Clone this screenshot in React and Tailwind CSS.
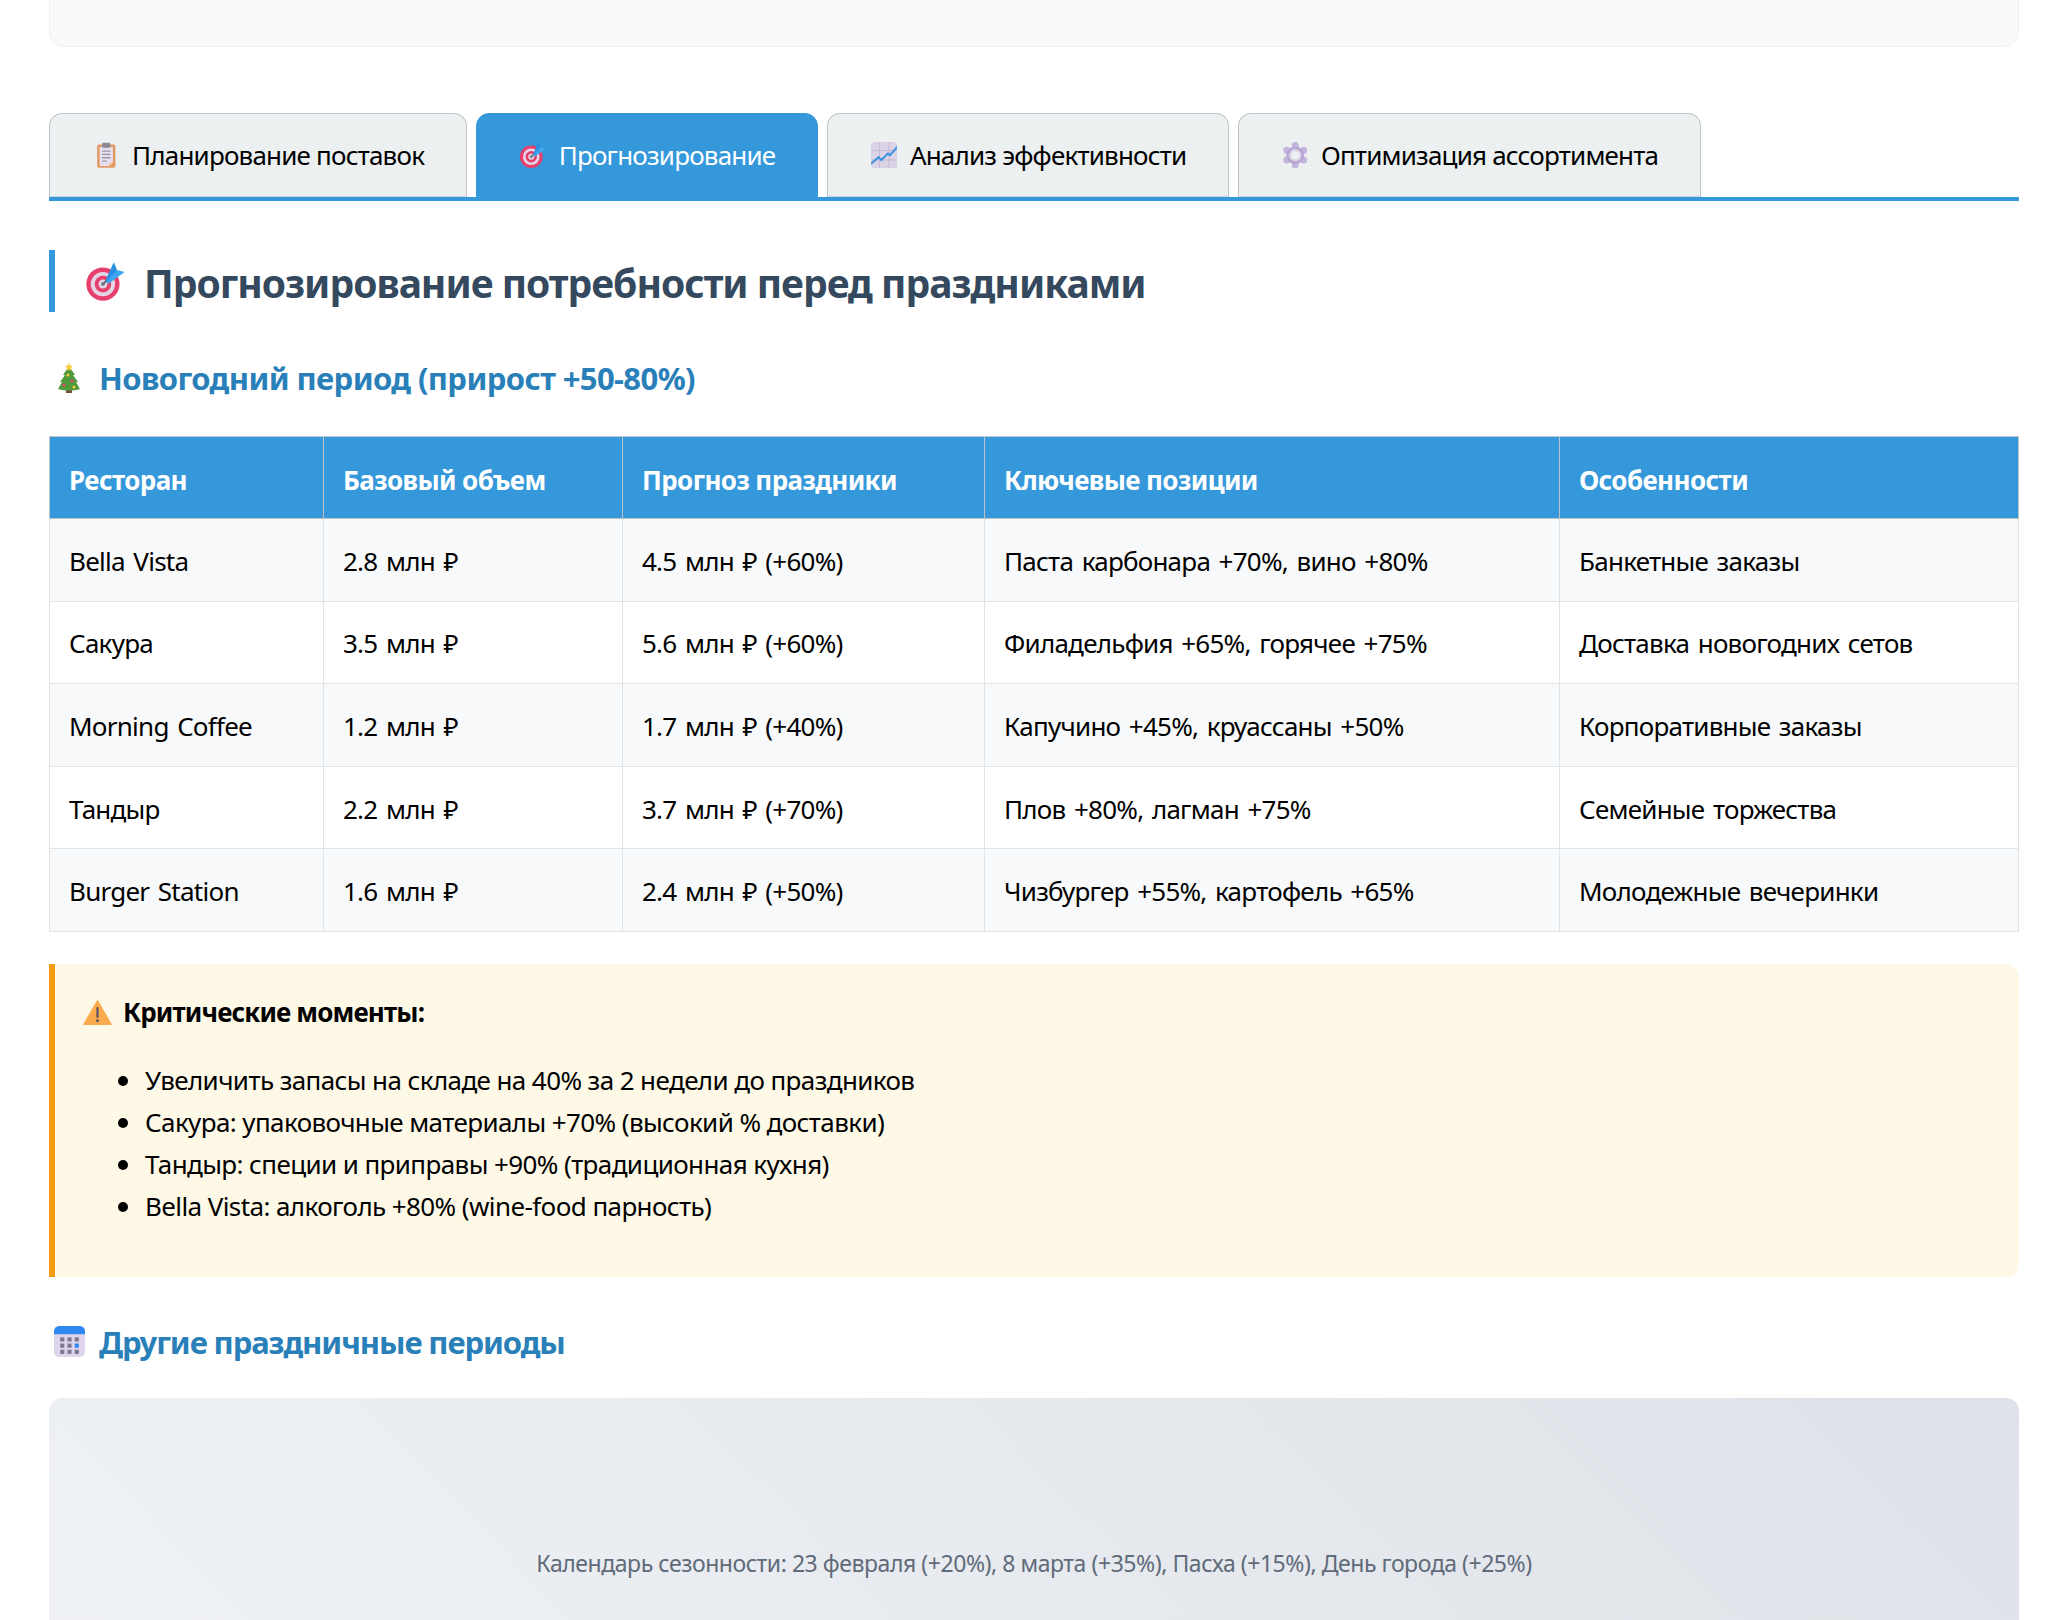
const font = "font-['Noto_Sans','Open_Sans',sans-serif]";

function ClipboardIcon({ className }) {
  return (
    <svg viewBox="0 0 32 32" className={className}>
      <rect x="5" y="3" width="22" height="28" rx="2" fill="#e39a62" />
      <path d="M8 6h16v19l-5 4H8z" fill="#e6e0f0" />
      <path d="M19 29v-4h5z" fill="#f4c9a0" />
      <rect x="11" y="1" width="10" height="6" rx="1.5" fill="#8d8794" />
      <path d="M11 11h10M11 15h10M11 19h10M11 23h6" stroke="#9c95a8" strokeWidth="1.6" />
    </svg>
  );
}

function TargetIcon({ className }) {
  return (
    <svg viewBox="0 0 32 32" className={className}>
      <circle cx="14" cy="18" r="13" fill="#e8406c" />
      <circle cx="14" cy="18" r="9.5" fill="#e3d5e6" />
      <circle cx="14" cy="18" r="6.5" fill="#e8406c" />
      <circle cx="14" cy="18" r="3.5" fill="#e3d5e6" />
      <circle cx="14" cy="18" r="1.6" fill="#8b8391" />
      <path d="M14 18 L19 13" stroke="#5f6a7a" strokeWidth="1.4" />
      <path d="M16 15L22.5 1l2.5 6-7 9z" fill="#2a8fe0" />
      <path d="M16.5 16.5L25 7l6 1.5L18 18z" fill="#3ba7f0" />
    </svg>
  );
}

function ChartIcon({ className }) {
  return (
    <svg viewBox="2 2 28 28" className={className}>
      <rect x="2" y="2" width="28" height="28" rx="4" fill="#dcd3e6" />
      <path d="M2 11h28M2 21h28M11 2v28M21 2v28" stroke="#c5b9d4" strokeWidth="1" />
      <path d="M2 25l8-7 3 3 7-7 2 2 8-9" fill="none" stroke="#3b94e0" strokeWidth="2.2" />
    </svg>
  );
}

function GearIcon({ className }) {
  return (
    <svg viewBox="1 1 30 30" className={className}>
      <g fill="#c3b6dd">
        <circle cx="16" cy="5" r="4" />
        <circle cx="16" cy="27" r="4" />
        <circle cx="6.5" cy="10.5" r="4" />
        <circle cx="25.5" cy="10.5" r="4" />
        <circle cx="6.5" cy="21.5" r="4" />
        <circle cx="25.5" cy="21.5" r="4" />
      </g>
      <circle cx="16" cy="16" r="10" fill="#b5a5d3" />
      <circle cx="16" cy="16" r="7" fill="#dcd6e6" />
      <circle cx="16" cy="16" r="4.5" fill="#eef0f2" />
    </svg>
  );
}

function TreeIcon({ className }) {
  return (
    <svg viewBox="4 1 24 30" className={className}>
      <rect x="13" y="27" width="6" height="4" fill="#7a4a3a" />
      <path d="M16 4L10 13h2L7 20h2L5 27c7 2 15 2 22 0l-4-7h2l-5-7h2z" fill="#4f9a3c" />
      <path d="M16 1l1.2 2.6 2.8.3-2 2 .5 2.8-2.5-1.3-2.5 1.3.5-2.8-2-2 2.8-.3z" fill="#f7cf3d" />
      <circle cx="15" cy="13" r="1.5" fill="#f7cf3d" />
      <circle cx="19" cy="19" r="1.5" fill="#e8406c" />
      <circle cx="11" cy="23" r="1.5" fill="#e8406c" />
      <circle cx="21" cy="25" r="1.5" fill="#f7cf3d" />
    </svg>
  );
}

function WarningIcon({ className }) {
  return (
    <svg viewBox="0 0 32 32" className={className}>
      <path d="M16 3L31 29H1z" fill="#fbab4e" stroke="#fbab4e" strokeWidth="1.5" strokeLinejoin="round" />
      <rect x="14.8" y="10" width="2.4" height="12" rx="1" fill="#5c5160" />
      <circle cx="16" cy="25" r="1.6" fill="#5c5160" />
    </svg>
  );
}

function CalendarIcon({ className }) {
  return (
    <svg viewBox="1 1 30 30" className={className}>
      <rect x="1" y="1" width="30" height="30" rx="5" fill="#ded4ec" />
      <path d="M1 9V6a5 5 0 0 1 5-5h20a5 5 0 0 1 5 5v3z" fill="#2f87f0" />
      <g fill="#7d7890">
        <rect x="7" y="12" width="4" height="4" />
        <rect x="14" y="12" width="4" height="4" />
        <rect x="21" y="12" width="4" height="4" />
        <rect x="7" y="18" width="4" height="4" />
        <rect x="14" y="18" width="4" height="4" />
        <rect x="7" y="24" width="4" height="4" />
        <rect x="14" y="24" width="4" height="4" />
        <rect x="21" y="24" width="4" height="4" />
      </g>
      <rect x="21" y="18" width="4" height="4" fill="#2f87f0" />
    </svg>
  );
}

const tabs = [
  { label: "Планирование поставок", Icon: ClipboardIcon },
  { label: "Прогнозирование", Icon: TargetIcon, active: true },
  { label: "Анализ эффективности", Icon: ChartIcon },
  { label: "Оптимизация ассортимента", Icon: GearIcon },
];

const headers = ["Ресторан", "Базовый объем", "Прогноз праздники", "Ключевые позиции", "Особенности"];

const rows = [
  ["Bella Vista", "2.8 млн ₽", "4.5 млн ₽ (+60%)", "Паста карбонара +70%, вино +80%", "Банкетные заказы"],
  ["Сакура", "3.5 млн ₽", "5.6 млн ₽ (+60%)", "Филадельфия +65%, горячее +75%", "Доставка новогодних сетов"],
  ["Morning Coffee", "1.2 млн ₽", "1.7 млн ₽ (+40%)", "Капучино +45%, круассаны +50%", "Корпоративные заказы"],
  ["Тандыр", "2.2 млн ₽", "3.7 млн ₽ (+70%)", "Плов +80%, лагман +75%", "Семейные торжества"],
  ["Burger Station", "1.6 млн ₽", "2.4 млн ₽ (+50%)", "Чизбургер +55%, картофель +65%", "Молодежные вечеринки"],
];

const notes = [
  "Увеличить запасы на складе на 40% за 2 недели до праздников",
  "Сакура: упаковочные материалы +70% (высокий % доставки)",
  "Тандыр: специи и приправы +90% (традиционная кухня)",
  "Bella Vista: алкоголь +80% (wine-food парность)",
];

export default function App() {
  return (
    <div className={`${font} h-[1620px] overflow-hidden bg-white pl-[49px] pr-[30px] text-black`}>
      <div className="h-[47px] rounded-b-[16px] border border-t-0 border-[#f0f2f2] bg-[#f9fafa]" />

      <div className="mt-[66px] flex h-[88px] gap-[8.5px] border-b-[4px] border-[#3498db]">
        {tabs.map(({ label, Icon, active }) => (
          <div
            key={label}
            className={`flex h-[84px] items-center gap-[10px] rounded-t-[13px] border pl-[40px] pr-[42px] text-[26px] tracking-[-0.8px] ${
              active
                ? "border-[#3498db] bg-[#3498db] text-white"
                : "border-[#bdc3c7] border-b-[#cfd4d6] bg-[#ecf0f1] text-black"
            }`}
          >
            <span className="flex w-[32px] shrink-0 justify-center">
              <Icon className={active ? "h-[28px] w-[28px]" : "h-[26.5px] w-[26.5px]"} />
            </span>
            {label}
          </div>
        ))}
      </div>

      <h2 className="mt-[49px] flex h-[62px] items-center gap-[18px] border-l-[6px] border-[#3498db] pl-[30px] pt-[4px] text-[39px] font-bold tracking-[-1px] text-[#34495e]">
        <TargetIcon className="-mt-[4px] h-[41px] w-[41px] shrink-0" />
        Прогнозирование потребности перед праздниками
      </h2>

      <h3 className="mt-[46px] flex h-[40px] items-center gap-[18px] pl-[8px] text-[31px] font-bold tracking-[-0.6px] text-[#2980b9]">
        <TreeIcon className="h-[30px] w-[24px] shrink-0" />
        Новогодний период (прирост +50-80%)
      </h3>

      <table className="mt-[38px] w-full table-fixed border-collapse text-[26px] tracking-[-0.75px] [word-spacing:2.5px]">
        <colgroup>
          <col className="w-[274px]" />
          <col className="w-[299px]" />
          <col className="w-[362px]" />
          <col className="w-[575px]" />
          <col />
        </colgroup>
        <thead>
          <tr className="h-[82px] bg-[#3498db] text-left text-white">
            {headers.map((h) => (
              <th key={h} className="border border-[#bdc3c7] px-[19px] pt-[5px] font-bold tracking-[-0.6px] [word-spacing:0px]">
                {h}
              </th>
            ))}
          </tr>
        </thead>
        <tbody>
          {rows.map((row, i) => (
            <tr key={row[0]} className={`h-[82.6px] ${i % 2 === 0 ? "bg-[#f8f9fa]" : "bg-white"}`}>
              {row.map((cell) => (
                <td key={cell} className="border border-[#e1e4e6] px-[19px] pt-[3px]">
                  {cell}
                </td>
              ))}
            </tr>
          ))}
        </tbody>
      </table>

      <div className="mt-[32px] h-[313px] rounded-r-[13px] border-l-[6px] border-[#f39c12] bg-[#fef9e7] pl-[28px] pt-[29px] text-[26px] tracking-[-0.6px]">
        <div className="flex h-[40px] items-center gap-[11px] font-bold tracking-[-0.85px]">
          <WarningIcon className="h-[29px] w-[29px] shrink-0" />
          Критические моменты:
        </div>
        <ul className="mt-[27px] pl-[35px]">
          {notes.map((n) => (
            <li key={n} className="flex h-[42px] items-center gap-[17px]">
              <span className="h-[10px] w-[10px] shrink-0 rounded-full bg-black" />
              {n}
            </li>
          ))}
        </ul>
      </div>

      <h3 className="mt-[45px] flex h-[40px] items-center gap-[14px] pl-[5px] text-[31px] font-bold tracking-[-1.1px] text-[#2980b9]">
        <CalendarIcon className="h-[31px] w-[31px] shrink-0" />
        Другие праздничные периоды
      </h3>

      <div className="mt-[36px] flex h-[330px] items-center justify-center rounded-[13px] bg-linear-45 from-[#f0f2f5] to-[#dee2e8] text-[23px] tracking-[-0.45px] text-[#5f6b7a]">
        Календарь сезонности: 23 февраля (+20%), 8 марта (+35%), Пасха (+15%), День города (+25%)
      </div>
    </div>
  );
}
